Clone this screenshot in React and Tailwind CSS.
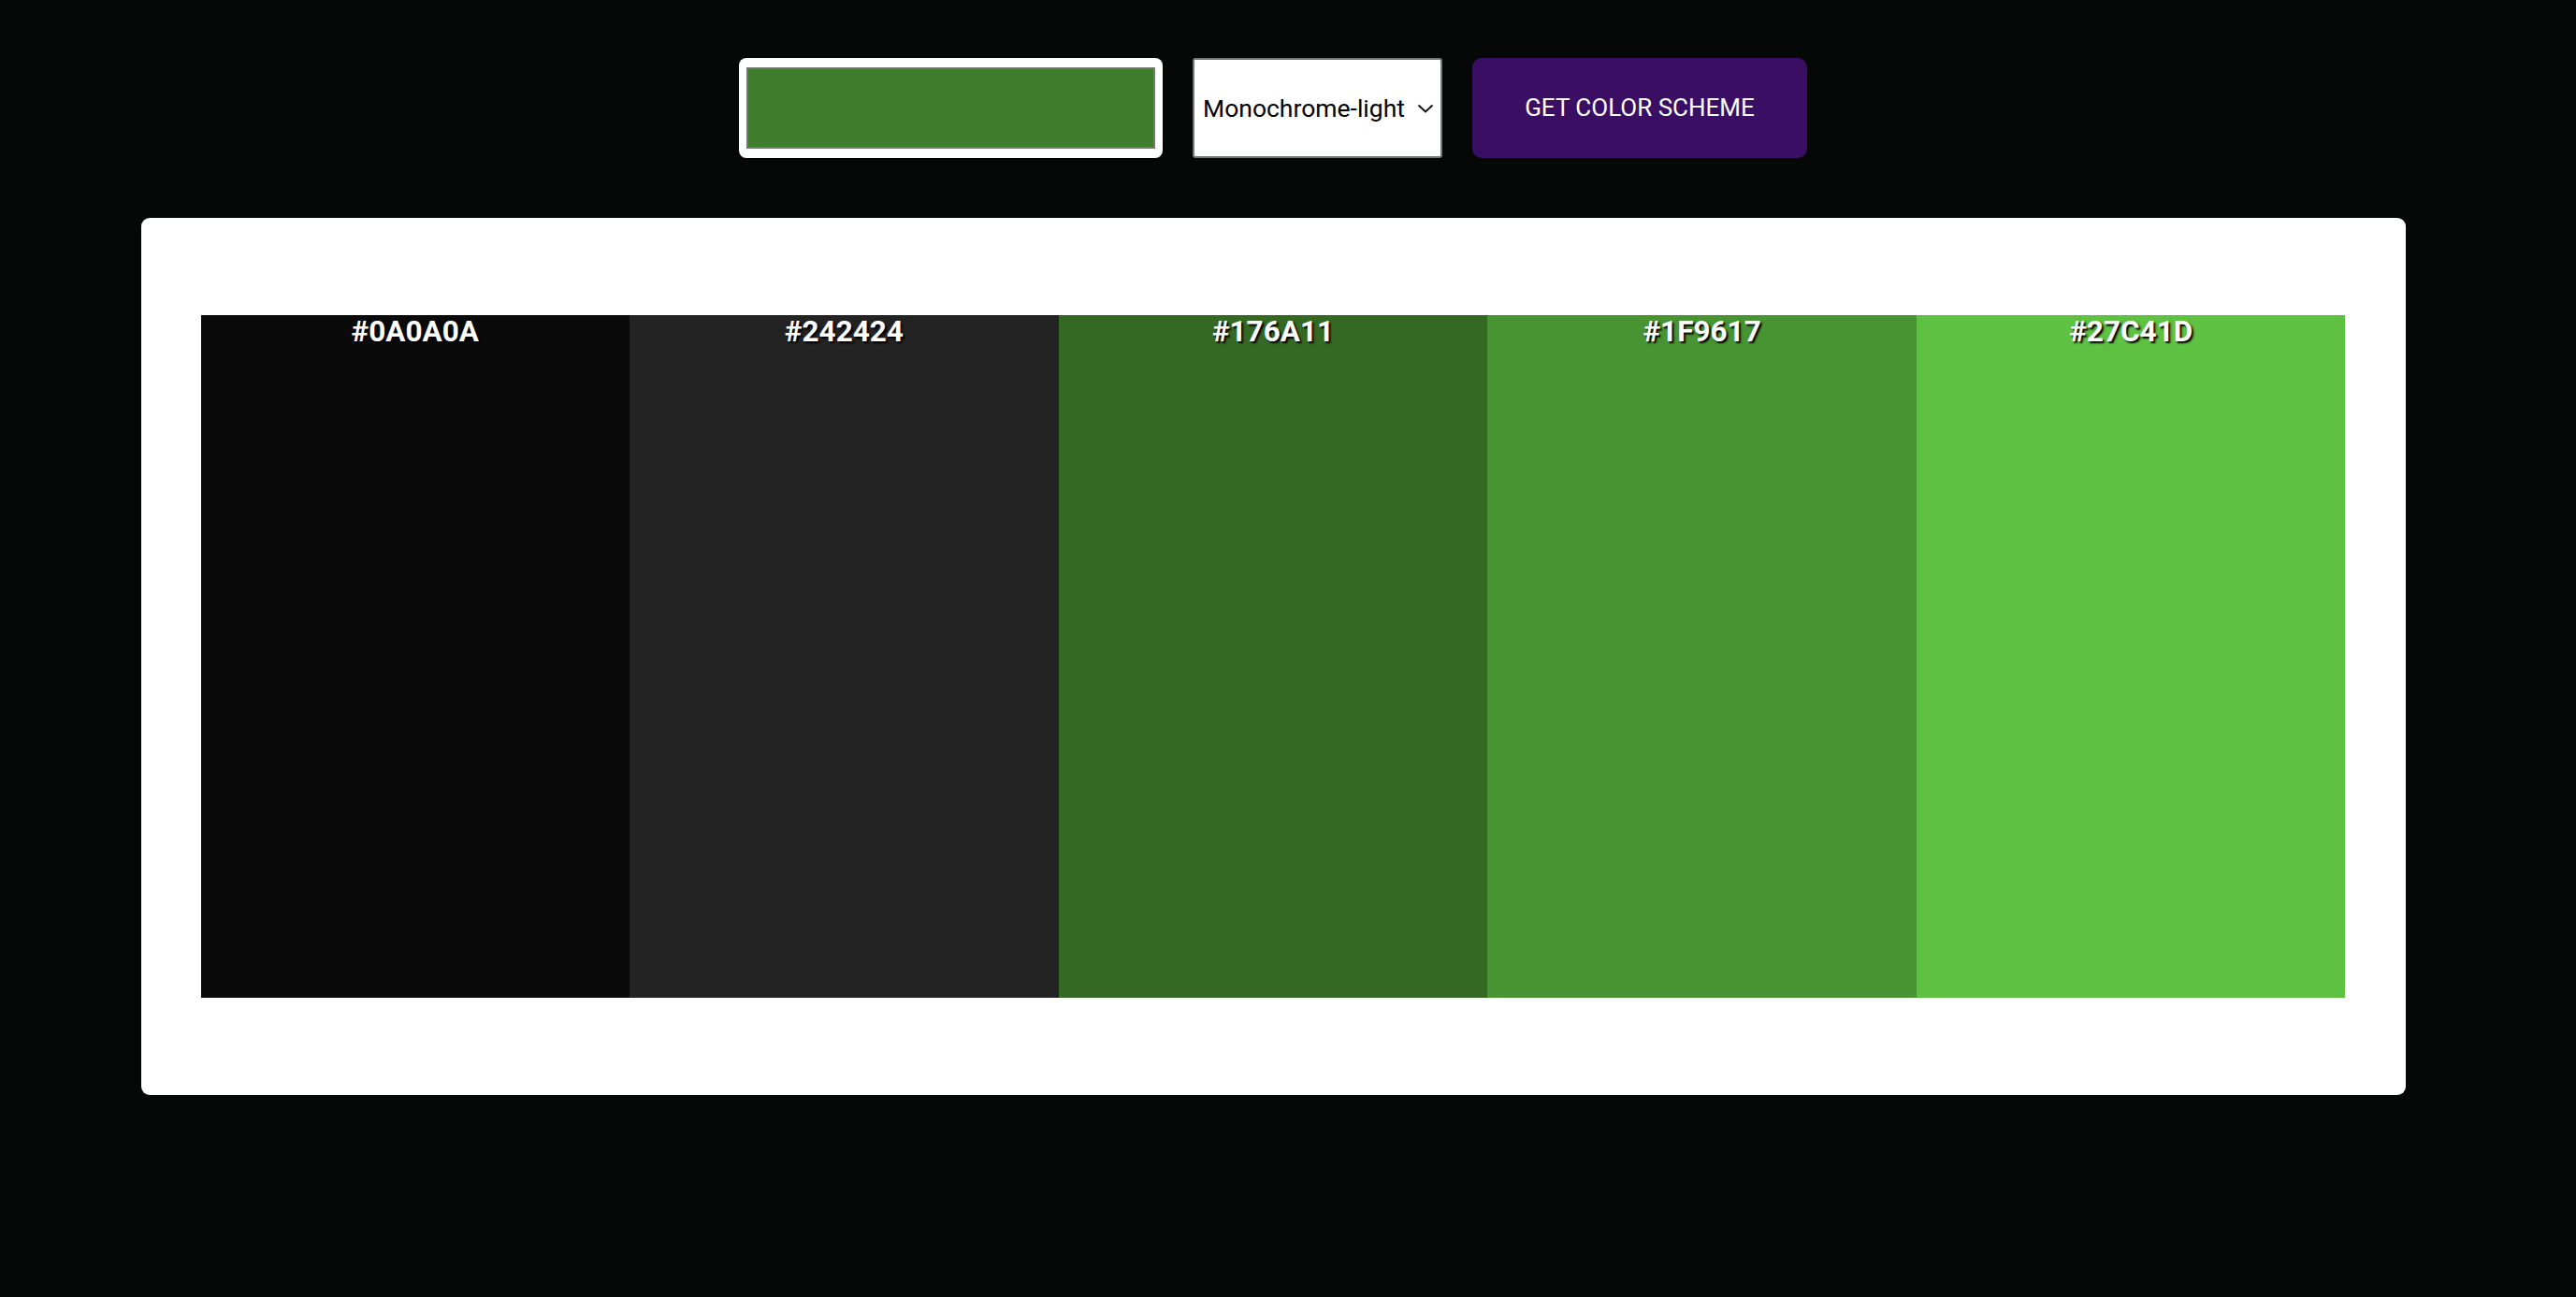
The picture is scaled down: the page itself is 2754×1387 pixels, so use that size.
import React from "react";

const colors = [
  { hex: "#0A0A0A", bg: "bg-[#0a0a0a]" },
  { hex: "#242424", bg: "bg-[#232323]" },
  { hex: "#176A11", bg: "bg-[#346823]" },
  { hex: "#1F9617", bg: "bg-[#489432]" },
  { hex: "#27C41D", bg: "bg-[#5ec142]" },
];

export default function App() {
  return (
    <div className="min-h-screen bg-[#060807] font-['Roboto',sans-serif]">
      <div className="w-[2722px] flex flex-col items-center pt-[62px]">
        {/* controls */}
        <div className="flex gap-[32px] h-[107px]">
          <div className="w-[453px] bg-white rounded-[8px] px-[8px] py-[10px]">
            <div className="w-full h-full bg-[#3d7d2b] border-2 border-[#777777]" />
          </div>
          <div className="w-[267px] bg-white border-2 border-[#767676] rounded-[3px] flex items-center justify-between pl-[9px] pr-[7px] text-[26.5px] text-black">
            <span>Monochrome-light</span>
            <svg width="18" height="10" viewBox="0 0 18 10" fill="none">
              <path d="M1.5 1.5L9 8.5L16.5 1.5" stroke="#111" strokeWidth="2" />
            </svg>
          </div>
          <button className="w-[358px] bg-[#3a0e63] text-white rounded-[10px] text-[26px] uppercase">
            Get Color Scheme
          </button>
        </div>

        {/* palette card */}
        <div className="mt-[64px] w-[2421px] bg-white rounded-[9px] px-[64px] py-[104px]">
          <div className="flex h-[730px]">
            {colors.map((c) => (
              <div key={c.hex} className={`flex-1 ${c.bg}`}>
                <div className="text-center text-[31.5px] leading-[1.17] font-bold text-white [text-shadow:2px_2px_2px_#000]">
                  {c.hex}
                </div>
              </div>
            ))}
          </div>
        </div>
      </div>
    </div>
  );
}
